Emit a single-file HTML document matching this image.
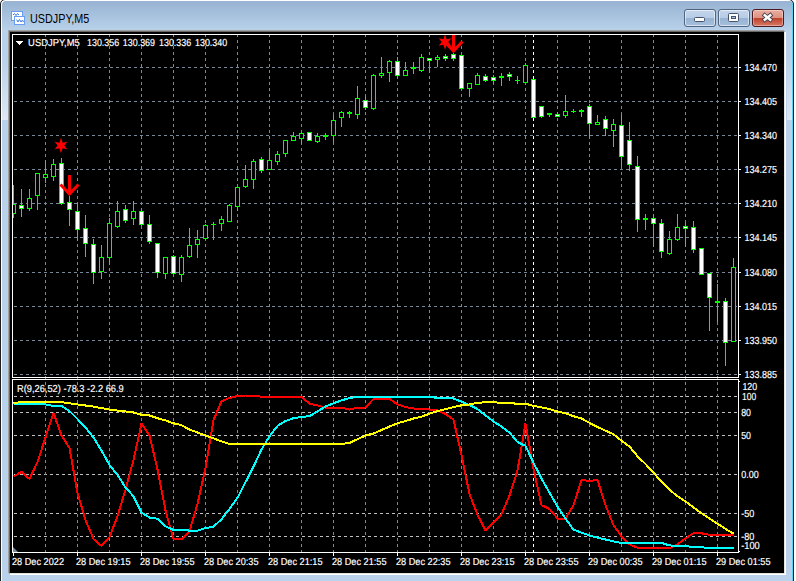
<!DOCTYPE html>
<html lang="en">
<head>
<meta charset="utf-8">
<title>USDJPY,M5</title>
<style>
html,body{margin:0;padding:0;background:#ffffff;}
html{overflow:hidden;}
body{width:796px;height:581px;overflow:hidden;font-family:"Liberation Sans",Arial,sans-serif;}
#screen{position:relative;width:796px;height:581px;overflow:hidden;background:#ffffff;}
#win{position:absolute;left:0;top:-1px;width:792px;height:600px;border:1px solid #1e1e1e;border-radius:5px 5px 0 0;
 background:linear-gradient(to bottom,#98b3d1 0px,#99b5d3 3px,#b9d1ea 30px,#b9d1ea 100%);
 box-shadow:inset 1px 1px 0 0 #ffffff, inset -1px 0 0 0 #5fd0f0;}
#title{position:absolute;left:29px;top:11px;height:16px;line-height:16px;font-size:12px;color:#000;white-space:nowrap;
 transform-origin:0 50%;transform:scaleX(0.9);letter-spacing:0;}
#icon{position:absolute;left:9px;top:10px;width:16px;height:16px;}
.btn{position:absolute;top:9px;width:30px;height:16px;border:1px solid #50637f;border-radius:3px;
 background:linear-gradient(to bottom,#c4d5eb 0%,#b7cce6 47%,#97b2d2 50%,#a6bfdd 100%);
 box-shadow:inset 0 0 0 1px rgba(255,255,255,0.55);}
#bmin{left:683px;} #bmax{left:717px;}
#bclose{left:751px;border-color:#4d1a21;
 background:linear-gradient(to bottom,#eaad9f 0%,#dd9383 47%,#bf4027 50%,#d67864 100%);
 box-shadow:inset 0 0 0 1px rgba(255,255,255,0.35);}
.btn svg{position:absolute;left:0;top:0;width:30px;height:16px;}
#client{position:absolute;left:8px;top:31px;width:774px;height:541px;background:#000;
 border-style:solid;border-width:1px;border-color:#696969 #e3e3e3 #e3e3e3 #696969;
 box-shadow:-1px -1px 0 0 #a0a0a0, 1px 1px 0 0 #ffffff;}
.glow{position:absolute;top:58px;height:62px;width:5px;background:linear-gradient(to bottom,rgba(255,255,255,0) 0%,rgba(255,255,255,0.5) 100%);}
#glowl{left:1px;width:6px;} #glowr{left:786px;}
#chart{position:absolute;left:0;top:0;width:796px;height:581px;}
</style>
</head>
<body>
<div id="screen">
<div id="win">
  <svg id="icon" viewBox="0 0 16 16" aria-hidden="true">
    <g shape-rendering="crispEdges">
    <rect x="1.5" y="1.5" width="11" height="9" fill="#ffffff" stroke="#6a9cf4" stroke-width="1"/>
    <rect x="4.5" y="6.5" width="10" height="8" fill="#ffffff" stroke="#6a9cf4" stroke-width="1"/>
    </g>
    <path d="M3 5 L4.5 3.5 L6 5.5 L7.5 3.5 L9 5" fill="none" stroke="#3a78e0" stroke-width="1"/>
    <path d="M6.5 9.5 L8 12 L9.5 9.5 L11 12 L12.5 10 L13.5 12" fill="none" stroke="#3a78e0" stroke-width="1"/>
  </svg>
  <div id="title">USDJPY,M5</div>
  <div class="btn" id="bmin"><svg viewBox="0 0 30 16"><rect x="9.5" y="7.5" width="10" height="4" rx="1" fill="#ffffff" stroke="#46526a"/></svg></div>
  <div class="btn" id="bmax"><svg viewBox="0 0 30 16"><rect x="9.5" y="3.5" width="10" height="8" rx="1" fill="#ffffff" stroke="#46526a"/><rect x="12.5" y="6.5" width="4" height="2" fill="#a9c3e2" stroke="#46526a"/></svg></div>
  <div class="btn" id="bclose"><svg viewBox="0 0 30 16"><path d="M11.7 5.3 L17.3 9.7 M17.3 5.3 L11.7 9.7" stroke="#46404a" stroke-width="4.2" stroke-linecap="square" fill="none"/><path d="M11.7 5.3 L17.3 9.7 M17.3 5.3 L11.7 9.7" stroke="#ffffff" stroke-width="2.4" stroke-linecap="square" fill="none"/></svg></div>
  <div class="glow" id="glowl"></div>
  <div class="glow" id="glowr"></div>
  <div id="client"></div>
</div>
<svg id="chart" width="796" height="581" viewBox="0 0 796 581">
<defs>
<clipPath id="mainclip"><rect x="13" y="35" width="725" height="342"/></clipPath>
<clipPath id="indclip"><rect x="13" y="380" width="725" height="172"/></clipPath>
</defs>
<g id="grid" stroke="#778899" stroke-width="1" stroke-dasharray="3 3" shape-rendering="crispEdges" fill="none">
<line x1="14" y1="67.5" x2="738" y2="67.5"/>
<line x1="14" y1="101.5" x2="738" y2="101.5"/>
<line x1="14" y1="135.5" x2="738" y2="135.5"/>
<line x1="14" y1="169.5" x2="738" y2="169.5"/>
<line x1="14" y1="203.5" x2="738" y2="203.5"/>
<line x1="14" y1="237.5" x2="738" y2="237.5"/>
<line x1="14" y1="272.5" x2="738" y2="272.5"/>
<line x1="14" y1="306.5" x2="738" y2="306.5"/>
<line x1="14" y1="340.5" x2="738" y2="340.5"/>
<line x1="14" y1="374.5" x2="738" y2="374.5"/>
<line x1="14" y1="396.5" x2="738" y2="396.5" stroke="#c0c0c0"/>
<line x1="14" y1="412.5" x2="738" y2="412.5" stroke="#c0c0c0"/>
<line x1="14" y1="435.5" x2="738" y2="435.5" stroke="#c0c0c0"/>
<line x1="14" y1="474.5" x2="738" y2="474.5" stroke="#c0c0c0"/>
<line x1="14" y1="513.5" x2="738" y2="513.5" stroke="#c0c0c0"/>
<line x1="14" y1="536.5" x2="738" y2="536.5" stroke="#c0c0c0"/>
<line x1="45.5" y1="34" x2="45.5" y2="552"/>
<line x1="77.5" y1="34" x2="77.5" y2="552"/>
<line x1="109.5" y1="34" x2="109.5" y2="552"/>
<line x1="141.5" y1="34" x2="141.5" y2="552"/>
<line x1="173.5" y1="34" x2="173.5" y2="552"/>
<line x1="205.5" y1="34" x2="205.5" y2="552"/>
<line x1="237.5" y1="34" x2="237.5" y2="552"/>
<line x1="269.5" y1="34" x2="269.5" y2="552"/>
<line x1="301.5" y1="34" x2="301.5" y2="552"/>
<line x1="333.5" y1="34" x2="333.5" y2="552"/>
<line x1="365.5" y1="34" x2="365.5" y2="552"/>
<line x1="397.5" y1="34" x2="397.5" y2="552"/>
<line x1="429.5" y1="34" x2="429.5" y2="552"/>
<line x1="461.5" y1="34" x2="461.5" y2="552"/>
<line x1="493.5" y1="34" x2="493.5" y2="552"/>
<line x1="525.5" y1="34" x2="525.5" y2="552"/>
<line x1="557.5" y1="34" x2="557.5" y2="552"/>
<line x1="589.5" y1="34" x2="589.5" y2="552"/>
<line x1="621.5" y1="34" x2="621.5" y2="552"/>
<line x1="653.5" y1="34" x2="653.5" y2="552"/>
<line x1="685.5" y1="34" x2="685.5" y2="552"/>
<line x1="717.5" y1="34" x2="717.5" y2="552"/>
</g>
<line id="daysep" x1="533.5" y1="34" x2="533.5" y2="552" stroke="#ffffff" stroke-width="1" stroke-dasharray="3 3" shape-rendering="crispEdges"/>
<g id="candles" shape-rendering="crispEdges" clip-path="url(#mainclip)">
<rect x="13" y="185" width="1" height="33" fill="#00ff00"/>
<rect x="11" y="204" width="5" height="10" fill="#00ff00"/>
<rect x="12" y="205" width="3" height="8" fill="#000000"/>
<rect x="21" y="189" width="1" height="28" fill="#00ff00"/>
<rect x="19" y="205" width="5" height="4" fill="#00ff00"/>
<rect x="20" y="206" width="3" height="2" fill="#ffffff"/>
<rect x="29" y="189" width="1" height="22" fill="#00ff00"/>
<rect x="27" y="198" width="5" height="11" fill="#00ff00"/>
<rect x="28" y="199" width="3" height="9" fill="#000000"/>
<rect x="37" y="173" width="1" height="37" fill="#00ff00"/>
<rect x="35" y="173" width="5" height="23" fill="#00ff00"/>
<rect x="36" y="174" width="3" height="21" fill="#000000"/>
<rect x="45" y="160" width="1" height="23" fill="#00ff00"/>
<rect x="43" y="174" width="5" height="4" fill="#00ff00"/>
<rect x="44" y="175" width="3" height="2" fill="#000000"/>
<rect x="53" y="159" width="1" height="22" fill="#00ff00"/>
<rect x="51" y="164" width="5" height="13" fill="#00ff00"/>
<rect x="52" y="165" width="3" height="11" fill="#000000"/>
<rect x="61" y="158" width="1" height="47" fill="#00ff00"/>
<rect x="59" y="163" width="5" height="41" fill="#00ff00"/>
<rect x="60" y="164" width="3" height="39" fill="#ffffff"/>
<rect x="69" y="196" width="1" height="30" fill="#00ff00"/>
<rect x="67" y="202" width="5" height="8" fill="#00ff00"/>
<rect x="68" y="203" width="3" height="6" fill="#ffffff"/>
<rect x="77" y="203" width="1" height="38" fill="#00ff00"/>
<rect x="75" y="211" width="5" height="19" fill="#00ff00"/>
<rect x="76" y="212" width="3" height="17" fill="#ffffff"/>
<rect x="85" y="215" width="1" height="42" fill="#00ff00"/>
<rect x="83" y="228" width="5" height="16" fill="#00ff00"/>
<rect x="84" y="229" width="3" height="14" fill="#ffffff"/>
<rect x="93" y="239" width="1" height="45" fill="#00ff00"/>
<rect x="91" y="244" width="5" height="29" fill="#00ff00"/>
<rect x="92" y="245" width="3" height="27" fill="#ffffff"/>
<rect x="101" y="245" width="1" height="34" fill="#00ff00"/>
<rect x="99" y="257" width="5" height="15" fill="#00ff00"/>
<rect x="100" y="258" width="3" height="13" fill="#000000"/>
<rect x="109" y="218" width="1" height="47" fill="#00ff00"/>
<rect x="107" y="223" width="5" height="35" fill="#00ff00"/>
<rect x="108" y="224" width="3" height="33" fill="#000000"/>
<rect x="117" y="201" width="1" height="27" fill="#00ff00"/>
<rect x="115" y="211" width="5" height="16" fill="#00ff00"/>
<rect x="116" y="212" width="3" height="14" fill="#000000"/>
<rect x="125" y="205" width="1" height="18" fill="#00ff00"/>
<rect x="123" y="209" width="5" height="12" fill="#00ff00"/>
<rect x="124" y="210" width="3" height="10" fill="#ffffff"/>
<rect x="133" y="201" width="1" height="24" fill="#00ff00"/>
<rect x="131" y="211" width="5" height="8" fill="#00ff00"/>
<rect x="132" y="212" width="3" height="6" fill="#000000"/>
<rect x="141" y="208" width="1" height="18" fill="#00ff00"/>
<rect x="139" y="211" width="5" height="14" fill="#00ff00"/>
<rect x="140" y="212" width="3" height="12" fill="#ffffff"/>
<rect x="149" y="215" width="1" height="29" fill="#00ff00"/>
<rect x="147" y="224" width="5" height="18" fill="#00ff00"/>
<rect x="148" y="225" width="3" height="16" fill="#ffffff"/>
<rect x="157" y="243" width="1" height="35" fill="#00ff00"/>
<rect x="155" y="243" width="5" height="30" fill="#00ff00"/>
<rect x="156" y="244" width="3" height="28" fill="#ffffff"/>
<rect x="165" y="257" width="1" height="22" fill="#00ff00"/>
<rect x="163" y="257" width="5" height="17" fill="#00ff00"/>
<rect x="164" y="258" width="3" height="15" fill="#000000"/>
<rect x="173" y="255" width="1" height="19" fill="#00ff00"/>
<rect x="171" y="256" width="5" height="18" fill="#00ff00"/>
<rect x="172" y="257" width="3" height="16" fill="#ffffff"/>
<rect x="181" y="255" width="1" height="27" fill="#00ff00"/>
<rect x="179" y="257" width="5" height="18" fill="#00ff00"/>
<rect x="180" y="258" width="3" height="16" fill="#000000"/>
<rect x="189" y="228" width="1" height="30" fill="#00ff00"/>
<rect x="187" y="245" width="5" height="12" fill="#00ff00"/>
<rect x="188" y="246" width="3" height="10" fill="#000000"/>
<rect x="197" y="230" width="1" height="28" fill="#00ff00"/>
<rect x="195" y="239" width="5" height="6" fill="#00ff00"/>
<rect x="196" y="240" width="3" height="4" fill="#000000"/>
<rect x="205" y="224" width="1" height="16" fill="#00ff00"/>
<rect x="203" y="225" width="5" height="14" fill="#00ff00"/>
<rect x="204" y="226" width="3" height="12" fill="#000000"/>
<rect x="213" y="222" width="1" height="18" fill="#00ff00"/>
<rect x="211" y="224" width="5" height="1" fill="#00ff00"/>
<rect x="221" y="216" width="1" height="15" fill="#00ff00"/>
<rect x="219" y="219" width="5" height="5" fill="#00ff00"/>
<rect x="220" y="220" width="3" height="3" fill="#000000"/>
<rect x="229" y="204" width="1" height="18" fill="#00ff00"/>
<rect x="227" y="205" width="5" height="17" fill="#00ff00"/>
<rect x="228" y="206" width="3" height="15" fill="#000000"/>
<rect x="237" y="187" width="1" height="24" fill="#00ff00"/>
<rect x="235" y="187" width="5" height="20" fill="#00ff00"/>
<rect x="236" y="188" width="3" height="18" fill="#000000"/>
<rect x="245" y="165" width="1" height="23" fill="#00ff00"/>
<rect x="243" y="179" width="5" height="8" fill="#00ff00"/>
<rect x="244" y="180" width="3" height="6" fill="#000000"/>
<rect x="253" y="159" width="1" height="30" fill="#00ff00"/>
<rect x="251" y="161" width="5" height="19" fill="#00ff00"/>
<rect x="252" y="162" width="3" height="17" fill="#000000"/>
<rect x="261" y="157" width="1" height="16" fill="#00ff00"/>
<rect x="259" y="159" width="5" height="12" fill="#00ff00"/>
<rect x="260" y="160" width="3" height="10" fill="#ffffff"/>
<rect x="269" y="150" width="1" height="20" fill="#00ff00"/>
<rect x="267" y="160" width="5" height="10" fill="#00ff00"/>
<rect x="268" y="161" width="3" height="8" fill="#000000"/>
<rect x="277" y="151" width="1" height="14" fill="#00ff00"/>
<rect x="275" y="154" width="5" height="8" fill="#00ff00"/>
<rect x="276" y="155" width="3" height="6" fill="#000000"/>
<rect x="285" y="140" width="1" height="17" fill="#00ff00"/>
<rect x="283" y="140" width="5" height="14" fill="#00ff00"/>
<rect x="284" y="141" width="3" height="12" fill="#000000"/>
<rect x="293" y="132" width="1" height="9" fill="#00ff00"/>
<rect x="291" y="136" width="5" height="5" fill="#00ff00"/>
<rect x="292" y="137" width="3" height="3" fill="#000000"/>
<rect x="301" y="132" width="1" height="12" fill="#00ff00"/>
<rect x="299" y="133" width="5" height="6" fill="#00ff00"/>
<rect x="300" y="134" width="3" height="4" fill="#000000"/>
<rect x="309" y="132" width="1" height="9" fill="#00ff00"/>
<rect x="307" y="132" width="5" height="9" fill="#00ff00"/>
<rect x="308" y="133" width="3" height="7" fill="#ffffff"/>
<rect x="317" y="133" width="1" height="10" fill="#00ff00"/>
<rect x="315" y="136" width="5" height="6" fill="#00ff00"/>
<rect x="316" y="137" width="3" height="4" fill="#000000"/>
<rect x="325" y="133" width="1" height="7" fill="#00ff00"/>
<rect x="323" y="135" width="5" height="2" fill="#00ff00"/>
<rect x="333" y="115" width="1" height="27" fill="#00ff00"/>
<rect x="331" y="120" width="5" height="16" fill="#00ff00"/>
<rect x="332" y="121" width="3" height="14" fill="#000000"/>
<rect x="341" y="111" width="1" height="16" fill="#00ff00"/>
<rect x="339" y="112" width="5" height="6" fill="#00ff00"/>
<rect x="340" y="113" width="3" height="4" fill="#000000"/>
<rect x="349" y="111" width="1" height="7" fill="#00ff00"/>
<rect x="347" y="112" width="5" height="2" fill="#00ff00"/>
<rect x="357" y="86" width="1" height="33" fill="#00ff00"/>
<rect x="355" y="98" width="5" height="17" fill="#00ff00"/>
<rect x="356" y="99" width="3" height="15" fill="#000000"/>
<rect x="365" y="96" width="1" height="14" fill="#00ff00"/>
<rect x="363" y="100" width="5" height="8" fill="#00ff00"/>
<rect x="364" y="101" width="3" height="6" fill="#ffffff"/>
<rect x="373" y="74" width="1" height="36" fill="#00ff00"/>
<rect x="371" y="75" width="5" height="34" fill="#00ff00"/>
<rect x="372" y="76" width="3" height="32" fill="#000000"/>
<rect x="381" y="57" width="1" height="21" fill="#00ff00"/>
<rect x="379" y="73" width="5" height="3" fill="#00ff00"/>
<rect x="380" y="74" width="3" height="1" fill="#000000"/>
<rect x="389" y="60" width="1" height="22" fill="#00ff00"/>
<rect x="387" y="61" width="5" height="12" fill="#00ff00"/>
<rect x="388" y="62" width="3" height="10" fill="#000000"/>
<rect x="397" y="57" width="1" height="21" fill="#00ff00"/>
<rect x="395" y="61" width="5" height="15" fill="#00ff00"/>
<rect x="396" y="62" width="3" height="13" fill="#ffffff"/>
<rect x="405" y="62" width="1" height="14" fill="#00ff00"/>
<rect x="403" y="70" width="5" height="6" fill="#00ff00"/>
<rect x="404" y="71" width="3" height="4" fill="#000000"/>
<rect x="413" y="62" width="1" height="12" fill="#00ff00"/>
<rect x="411" y="67" width="5" height="2" fill="#00ff00"/>
<rect x="421" y="54" width="1" height="18" fill="#00ff00"/>
<rect x="419" y="57" width="5" height="14" fill="#00ff00"/>
<rect x="420" y="58" width="3" height="12" fill="#000000"/>
<rect x="429" y="58" width="1" height="15" fill="#00ff00"/>
<rect x="427" y="58" width="5" height="3" fill="#00ff00"/>
<rect x="428" y="59" width="3" height="1" fill="#ffffff"/>
<rect x="437" y="55" width="1" height="12" fill="#00ff00"/>
<rect x="435" y="57" width="5" height="3" fill="#00ff00"/>
<rect x="436" y="58" width="3" height="1" fill="#000000"/>
<rect x="445" y="54" width="1" height="7" fill="#00ff00"/>
<rect x="443" y="56" width="5" height="3" fill="#00ff00"/>
<rect x="444" y="57" width="3" height="1" fill="#ffffff"/>
<rect x="453" y="53" width="1" height="8" fill="#00ff00"/>
<rect x="451" y="54" width="5" height="5" fill="#00ff00"/>
<rect x="452" y="55" width="3" height="3" fill="#ffffff"/>
<rect x="461" y="55" width="1" height="34" fill="#00ff00"/>
<rect x="459" y="55" width="5" height="34" fill="#00ff00"/>
<rect x="460" y="56" width="3" height="32" fill="#ffffff"/>
<rect x="469" y="83" width="1" height="14" fill="#00ff00"/>
<rect x="467" y="83" width="5" height="6" fill="#00ff00"/>
<rect x="468" y="84" width="3" height="4" fill="#000000"/>
<rect x="477" y="73" width="1" height="12" fill="#00ff00"/>
<rect x="475" y="75" width="5" height="10" fill="#00ff00"/>
<rect x="476" y="76" width="3" height="8" fill="#000000"/>
<rect x="485" y="74" width="1" height="8" fill="#00ff00"/>
<rect x="483" y="76" width="5" height="5" fill="#00ff00"/>
<rect x="484" y="77" width="3" height="3" fill="#ffffff"/>
<rect x="493" y="75" width="1" height="9" fill="#00ff00"/>
<rect x="491" y="77" width="5" height="4" fill="#00ff00"/>
<rect x="492" y="78" width="3" height="2" fill="#ffffff"/>
<rect x="501" y="73" width="1" height="13" fill="#00ff00"/>
<rect x="499" y="76" width="5" height="2" fill="#00ff00"/>
<rect x="509" y="72" width="1" height="9" fill="#00ff00"/>
<rect x="507" y="74" width="5" height="3" fill="#00ff00"/>
<rect x="508" y="75" width="3" height="1" fill="#ffffff"/>
<rect x="517" y="76" width="1" height="8" fill="#00ff00"/>
<rect x="515" y="80" width="5" height="1" fill="#00ff00"/>
<rect x="525" y="63" width="1" height="20" fill="#00ff00"/>
<rect x="523" y="65" width="5" height="18" fill="#00ff00"/>
<rect x="524" y="66" width="3" height="16" fill="#000000"/>
<rect x="533" y="79" width="1" height="39" fill="#00ff00"/>
<rect x="531" y="79" width="5" height="39" fill="#00ff00"/>
<rect x="532" y="80" width="3" height="37" fill="#ffffff"/>
<rect x="541" y="106" width="1" height="12" fill="#00ff00"/>
<rect x="539" y="106" width="5" height="11" fill="#00ff00"/>
<rect x="540" y="107" width="3" height="9" fill="#ffffff"/>
<rect x="549" y="113" width="1" height="4" fill="#00ff00"/>
<rect x="547" y="113" width="5" height="2" fill="#00ff00"/>
<rect x="557" y="112" width="1" height="5" fill="#00ff00"/>
<rect x="555" y="114" width="5" height="3" fill="#00ff00"/>
<rect x="556" y="115" width="3" height="1" fill="#ffffff"/>
<rect x="565" y="95" width="1" height="23" fill="#00ff00"/>
<rect x="563" y="111" width="5" height="5" fill="#00ff00"/>
<rect x="564" y="112" width="3" height="3" fill="#000000"/>
<rect x="573" y="109" width="1" height="4" fill="#00ff00"/>
<rect x="571" y="111" width="5" height="1" fill="#00ff00"/>
<rect x="581" y="109" width="1" height="8" fill="#00ff00"/>
<rect x="579" y="110" width="5" height="2" fill="#00ff00"/>
<rect x="589" y="104" width="1" height="34" fill="#00ff00"/>
<rect x="587" y="106" width="5" height="18" fill="#00ff00"/>
<rect x="588" y="107" width="3" height="16" fill="#ffffff"/>
<rect x="597" y="115" width="1" height="10" fill="#00ff00"/>
<rect x="595" y="122" width="5" height="3" fill="#00ff00"/>
<rect x="596" y="123" width="3" height="1" fill="#000000"/>
<rect x="605" y="116" width="1" height="20" fill="#00ff00"/>
<rect x="603" y="119" width="5" height="10" fill="#00ff00"/>
<rect x="604" y="120" width="3" height="8" fill="#ffffff"/>
<rect x="613" y="119" width="1" height="28" fill="#00ff00"/>
<rect x="611" y="124" width="5" height="7" fill="#00ff00"/>
<rect x="612" y="125" width="3" height="5" fill="#000000"/>
<rect x="621" y="115" width="1" height="52" fill="#00ff00"/>
<rect x="619" y="125" width="5" height="32" fill="#00ff00"/>
<rect x="620" y="126" width="3" height="30" fill="#ffffff"/>
<rect x="629" y="122" width="1" height="49" fill="#00ff00"/>
<rect x="627" y="140" width="5" height="25" fill="#00ff00"/>
<rect x="628" y="141" width="3" height="23" fill="#ffffff"/>
<rect x="637" y="156" width="1" height="76" fill="#00ff00"/>
<rect x="635" y="166" width="5" height="54" fill="#00ff00"/>
<rect x="636" y="167" width="3" height="52" fill="#ffffff"/>
<rect x="645" y="214" width="1" height="16" fill="#00ff00"/>
<rect x="643" y="218" width="5" height="2" fill="#00ff00"/>
<rect x="653" y="214" width="1" height="33" fill="#00ff00"/>
<rect x="651" y="218" width="5" height="6" fill="#00ff00"/>
<rect x="652" y="219" width="3" height="4" fill="#ffffff"/>
<rect x="661" y="219" width="1" height="39" fill="#00ff00"/>
<rect x="659" y="223" width="5" height="29" fill="#00ff00"/>
<rect x="660" y="224" width="3" height="27" fill="#ffffff"/>
<rect x="669" y="231" width="1" height="24" fill="#00ff00"/>
<rect x="667" y="239" width="5" height="15" fill="#00ff00"/>
<rect x="668" y="240" width="3" height="13" fill="#000000"/>
<rect x="677" y="214" width="1" height="27" fill="#00ff00"/>
<rect x="675" y="227" width="5" height="13" fill="#00ff00"/>
<rect x="676" y="228" width="3" height="11" fill="#000000"/>
<rect x="685" y="223" width="1" height="24" fill="#00ff00"/>
<rect x="683" y="226" width="5" height="3" fill="#00ff00"/>
<rect x="684" y="227" width="3" height="1" fill="#ffffff"/>
<rect x="693" y="221" width="1" height="32" fill="#00ff00"/>
<rect x="691" y="227" width="5" height="23" fill="#00ff00"/>
<rect x="692" y="228" width="3" height="21" fill="#ffffff"/>
<rect x="701" y="248" width="1" height="27" fill="#00ff00"/>
<rect x="699" y="248" width="5" height="27" fill="#00ff00"/>
<rect x="700" y="249" width="3" height="25" fill="#ffffff"/>
<rect x="709" y="273" width="1" height="58" fill="#00ff00"/>
<rect x="707" y="273" width="5" height="25" fill="#00ff00"/>
<rect x="708" y="274" width="3" height="23" fill="#ffffff"/>
<rect x="717" y="284" width="1" height="38" fill="#00ff00"/>
<rect x="715" y="301" width="5" height="2" fill="#00ff00"/>
<rect x="725" y="298" width="1" height="68" fill="#00ff00"/>
<rect x="723" y="301" width="5" height="42" fill="#00ff00"/>
<rect x="724" y="302" width="3" height="40" fill="#ffffff"/>
<rect x="733" y="258" width="1" height="84" fill="#00ff00"/>
<rect x="731" y="267" width="5" height="75" fill="#00ff00"/>
<rect x="732" y="268" width="3" height="73" fill="#000000"/>
</g>
<g id="signals" clip-path="url(#mainclip)">
<polygon points="61.00,137.80 62.65,142.64 67.32,141.85 64.30,145.50 67.32,149.15 62.65,148.36 61.00,153.20 59.35,148.36 54.68,149.15 57.70,145.50 54.68,141.85 59.35,142.64" fill="#ff0000"/>
<path d="M69.5 175.0 V194.5" stroke="#ff0000" stroke-width="3" fill="none"/><path d="M60.5 184.5 L69.5 194.0 L78.5 184.5" stroke="#ff0000" stroke-width="3" fill="none" stroke-linejoin="miter"/>
<polygon points="445.00,34.30 446.65,39.14 451.32,38.35 448.30,42.00 451.32,45.65 446.65,44.86 445.00,49.70 443.35,44.86 438.68,45.65 441.70,42.00 438.68,38.35 443.35,39.14" fill="#ff0000"/>
<path d="M453.5 32.0 V51.5" stroke="#ff0000" stroke-width="3" fill="none"/><path d="M444.5 41.5 L453.5 51.0 L462.5 41.5" stroke="#ff0000" stroke-width="3" fill="none" stroke-linejoin="miter"/>
</g>
<g id="indicator" clip-path="url(#indclip)">
<polyline points="13.5,476.4 21.5,471.9 29.5,479.0 37.5,462.0 45.5,437.5 53.5,412.8 61.5,435.5 69.5,448.0 77.5,493.0 85.5,520.0 93.5,539.0 101.5,546.0 109.5,537.0 117.5,516.3 125.5,489.7 133.5,460.0 141.5,423.6 149.5,435.5 157.5,469.4 165.5,510.4 173.5,539.2 181.5,539.2 189.5,531.1 197.5,504.0 205.5,468.0 213.5,420.0 221.5,401.4 229.5,398.0 237.5,396.0 245.5,395.5 253.5,395.8 261.5,396.7 269.5,396.7 277.5,396.7 285.5,396.7 293.5,396.7 301.5,396.7 309.5,403.7 317.5,405.4 325.5,407.7 333.5,407.7 341.5,407.8 349.5,409.6 357.5,407.8 365.5,407.5 373.5,398.9 381.5,398.8 389.5,398.9 397.5,404.4 405.5,407.1 413.5,408.5 421.5,408.5 429.5,409.6 437.5,410.3 445.5,414.0 453.5,419.6 461.5,455.0 469.5,494.1 477.5,514.8 485.5,530.3 493.5,522.2 501.5,514.1 509.5,495.6 517.5,470.4 525.5,423.6 533.5,469.0 541.5,505.2 549.5,508.9 557.5,518.5 565.5,518.5 573.5,505.2 581.5,480.1 589.5,480.8 597.5,480.1 605.5,505.2 613.5,525.2 621.5,536.3 629.5,544.4 637.5,547.7 645.5,547.7 653.5,548.4 661.5,548.4 669.5,548.1 677.5,544.4 685.5,538.5 693.5,533.3 701.5,533.3 709.5,534.8 717.5,534.8 725.5,534.8 733.5,534.8" fill="none" stroke="#ff0000" stroke-width="2" stroke-linejoin="round" shape-rendering="crispEdges"/>
<polyline points="13.5,403.4 21.5,404.4 29.5,404.4 37.5,404.4 45.5,404.4 53.5,405.9 61.5,405.9 69.5,411.0 77.5,419.0 85.5,427.5 93.5,437.5 101.5,450.5 109.5,465.0 117.5,474.9 125.5,487.4 133.5,496.3 141.5,512.6 149.5,517.5 157.5,518.8 165.5,526.4 173.5,529.9 181.5,529.9 189.5,530.6 197.5,530.6 205.5,528.1 213.5,526.7 221.5,519.3 229.5,508.9 237.5,497.8 245.5,482.3 253.5,466.7 261.5,449.5 269.5,436.2 277.5,425.9 285.5,421.0 293.5,418.2 301.5,417.0 309.5,416.2 317.5,411.4 325.5,406.6 333.5,403.2 341.5,400.4 349.5,398.0 357.5,397.0 365.5,396.7 373.5,396.7 381.5,396.7 389.5,396.7 397.5,396.7 405.5,396.7 413.5,396.7 421.5,396.7 429.5,396.7 437.5,398.0 445.5,398.0 453.5,398.5 461.5,401.6 469.5,405.1 477.5,409.1 485.5,415.5 493.5,421.4 501.5,426.6 509.5,432.5 517.5,442.1 525.5,445.8 533.5,462.8 541.5,478.6 549.5,492.6 557.5,506.7 565.5,518.5 573.5,529.6 581.5,532.6 589.5,535.5 597.5,537.7 605.5,539.5 613.5,541.4 621.5,542.9 629.5,542.9 637.5,542.9 645.5,542.9 653.5,542.9 661.5,542.9 669.5,545.4 677.5,545.9 685.5,546.2 693.5,546.9 701.5,547.4 709.5,547.7 717.5,547.7 725.5,547.7 733.5,547.7" fill="none" stroke="#00ffff" stroke-width="2" stroke-linejoin="round" shape-rendering="crispEdges"/>
<polyline points="13.5,402.9 21.5,402.2 29.5,402.2 37.5,402.2 45.5,402.2 53.5,402.2 61.5,402.2 69.5,403.3 77.5,404.4 85.5,405.5 93.5,406.6 101.5,408.1 109.5,409.6 117.5,410.6 125.5,411.5 133.5,412.5 141.5,414.8 149.5,415.5 157.5,418.2 165.5,420.4 173.5,423.3 181.5,425.1 189.5,429.6 197.5,432.5 205.5,435.5 213.5,438.4 221.5,441.4 229.5,443.9 237.5,443.9 245.5,443.9 253.5,443.9 261.5,443.9 269.5,443.9 277.5,443.9 285.5,443.9 293.5,443.9 301.5,443.9 309.5,443.9 317.5,443.9 325.5,443.9 333.5,443.9 341.5,443.9 349.5,442.9 357.5,439.2 365.5,435.5 373.5,433.5 381.5,430.0 389.5,426.6 397.5,423.2 405.5,421.1 413.5,418.5 421.5,416.7 429.5,413.7 437.5,411.1 445.5,409.1 453.5,407.1 461.5,405.3 469.5,404.4 477.5,402.9 485.5,402.2 493.5,402.2 501.5,402.9 509.5,403.2 517.5,403.7 525.5,403.7 533.5,405.9 541.5,407.4 549.5,409.1 557.5,411.5 565.5,413.3 573.5,416.2 581.5,418.5 589.5,422.9 597.5,427.0 605.5,430.7 613.5,434.3 621.5,440.7 629.5,446.6 637.5,456.2 645.5,464.0 653.5,472.7 661.5,481.5 669.5,489.7 677.5,496.3 685.5,501.5 693.5,507.4 701.5,513.3 709.5,518.5 717.5,523.7 725.5,528.9 733.5,533.6" fill="none" stroke="#ffff00" stroke-width="2" stroke-linejoin="round" shape-rendering="crispEdges"/>
</g>
<g id="frames" fill="none" stroke="#ffffff" stroke-width="1" shape-rendering="crispEdges">
<rect x="12.5" y="34.5" width="726" height="343"/>
<rect x="12.5" y="379.5" width="726" height="173"/>
<line x1="739" y1="67.5" x2="741" y2="67.5"/>
<line x1="739" y1="101.5" x2="741" y2="101.5"/>
<line x1="739" y1="135.5" x2="741" y2="135.5"/>
<line x1="739" y1="169.5" x2="741" y2="169.5"/>
<line x1="739" y1="203.5" x2="741" y2="203.5"/>
<line x1="739" y1="237.5" x2="741" y2="237.5"/>
<line x1="739" y1="272.5" x2="741" y2="272.5"/>
<line x1="739" y1="306.5" x2="741" y2="306.5"/>
<line x1="739" y1="340.5" x2="741" y2="340.5"/>
<line x1="739" y1="374.5" x2="741" y2="374.5"/>
<line x1="739" y1="381.5" x2="740" y2="381.5"/>
<line x1="739" y1="551.5" x2="740" y2="551.5"/>
<line x1="13.5" y1="553" x2="13.5" y2="556"/>
<line x1="77.5" y1="553" x2="77.5" y2="556"/>
<line x1="141.5" y1="553" x2="141.5" y2="556"/>
<line x1="205.5" y1="553" x2="205.5" y2="556"/>
<line x1="269.5" y1="553" x2="269.5" y2="556"/>
<line x1="333.5" y1="553" x2="333.5" y2="556"/>
<line x1="397.5" y1="553" x2="397.5" y2="556"/>
<line x1="461.5" y1="553" x2="461.5" y2="556"/>
<line x1="525.5" y1="553" x2="525.5" y2="556"/>
<line x1="589.5" y1="553" x2="589.5" y2="556"/>
<line x1="653.5" y1="553" x2="653.5" y2="556"/>
<line x1="717.5" y1="553" x2="717.5" y2="556"/>
</g>
<polygon points="13,547 13,552 18,552" fill="#778899"/>
<polygon points="16,41 23,41 19.5,45" fill="#ffffff" shape-rendering="crispEdges"/>
<g id="labels" text-rendering="geometricPrecision" stroke="#ffffff" stroke-width="0.18" font-family="'Liberation Sans', Arial, sans-serif">
<text x="28.1" y="46.0" font-size="10.2px" fill="#ffffff" text-anchor="start" textLength="51.7" lengthAdjust="spacingAndGlyphs">USDJPY,M5</text>
<text x="87.0" y="46.0" font-size="10.2px" fill="#ffffff" text-anchor="start" textLength="32.2" lengthAdjust="spacingAndGlyphs">130.356</text>
<text x="122.8" y="46.0" font-size="10.2px" fill="#ffffff" text-anchor="start" textLength="32.2" lengthAdjust="spacingAndGlyphs">130.369</text>
<text x="159.0" y="46.0" font-size="10.2px" fill="#ffffff" text-anchor="start" textLength="32.2" lengthAdjust="spacingAndGlyphs">130.336</text>
<text x="195.0" y="46.0" font-size="10.2px" fill="#ffffff" text-anchor="start" textLength="32.2" lengthAdjust="spacingAndGlyphs">130.340</text>
<text x="17.0" y="392.0" font-size="10.2px" fill="#ffffff" text-anchor="start" textLength="106.7" lengthAdjust="spacingAndGlyphs">R(9,26,52) -78.3 -2.2 66.9</text>
<text x="744.5" y="71.0" font-size="10.2px" fill="#ffffff" text-anchor="start" textLength="32.5" lengthAdjust="spacingAndGlyphs">134.470</text>
<text x="744.5" y="105.0" font-size="10.2px" fill="#ffffff" text-anchor="start" textLength="32.5" lengthAdjust="spacingAndGlyphs">134.405</text>
<text x="744.5" y="139.0" font-size="10.2px" fill="#ffffff" text-anchor="start" textLength="32.5" lengthAdjust="spacingAndGlyphs">134.340</text>
<text x="744.5" y="173.0" font-size="10.2px" fill="#ffffff" text-anchor="start" textLength="32.5" lengthAdjust="spacingAndGlyphs">134.275</text>
<text x="744.5" y="207.0" font-size="10.2px" fill="#ffffff" text-anchor="start" textLength="32.5" lengthAdjust="spacingAndGlyphs">134.210</text>
<text x="744.5" y="241.0" font-size="10.2px" fill="#ffffff" text-anchor="start" textLength="32.5" lengthAdjust="spacingAndGlyphs">134.145</text>
<text x="744.5" y="276.0" font-size="10.2px" fill="#ffffff" text-anchor="start" textLength="32.5" lengthAdjust="spacingAndGlyphs">134.080</text>
<text x="744.5" y="310.0" font-size="10.2px" fill="#ffffff" text-anchor="start" textLength="32.5" lengthAdjust="spacingAndGlyphs">134.015</text>
<text x="744.5" y="344.0" font-size="10.2px" fill="#ffffff" text-anchor="start" textLength="32.5" lengthAdjust="spacingAndGlyphs">133.950</text>
<text x="744.5" y="378.0" font-size="10.2px" fill="#ffffff" text-anchor="start" textLength="32.5" lengthAdjust="spacingAndGlyphs">133.885</text>
<text x="742.4" y="390.2" font-size="10.2px" fill="#ffffff" text-anchor="start" textLength="14.7" lengthAdjust="spacingAndGlyphs">120</text>
<text x="742.0" y="400.0" font-size="10.2px" fill="#ffffff" text-anchor="start" textLength="14.2" lengthAdjust="spacingAndGlyphs">100</text>
<text x="741.2" y="416.0" font-size="10.2px" fill="#ffffff" text-anchor="start" textLength="9.8" lengthAdjust="spacingAndGlyphs">80</text>
<text x="741.2" y="439.1" font-size="10.2px" fill="#ffffff" text-anchor="start" textLength="9.8" lengthAdjust="spacingAndGlyphs">50</text>
<text x="741.2" y="478.0" font-size="10.2px" fill="#ffffff" text-anchor="start" textLength="17.5" lengthAdjust="spacingAndGlyphs">0.00</text>
<text x="741.2" y="516.9" font-size="10.2px" fill="#ffffff" text-anchor="start" textLength="13.2" lengthAdjust="spacingAndGlyphs">-50</text>
<text x="741.2" y="540.1" font-size="10.2px" fill="#ffffff" text-anchor="start" textLength="13.2" lengthAdjust="spacingAndGlyphs">-80</text>
<text x="741.2" y="549.2" font-size="10.2px" fill="#ffffff" text-anchor="start" textLength="18.6" lengthAdjust="spacingAndGlyphs">-100</text>
<text x="12.0" y="565.0" font-size="10.2px" fill="#ffffff" text-anchor="start" textLength="52.0" lengthAdjust="spacingAndGlyphs">28 Dec 2022</text>
<text x="76.0" y="565.0" font-size="10.2px" fill="#ffffff" text-anchor="start" textLength="54.5" lengthAdjust="spacingAndGlyphs">28 Dec 19:15</text>
<text x="140.0" y="565.0" font-size="10.2px" fill="#ffffff" text-anchor="start" textLength="54.5" lengthAdjust="spacingAndGlyphs">28 Dec 19:55</text>
<text x="204.0" y="565.0" font-size="10.2px" fill="#ffffff" text-anchor="start" textLength="54.5" lengthAdjust="spacingAndGlyphs">28 Dec 20:35</text>
<text x="268.0" y="565.0" font-size="10.2px" fill="#ffffff" text-anchor="start" textLength="54.5" lengthAdjust="spacingAndGlyphs">28 Dec 21:15</text>
<text x="332.0" y="565.0" font-size="10.2px" fill="#ffffff" text-anchor="start" textLength="54.5" lengthAdjust="spacingAndGlyphs">28 Dec 21:55</text>
<text x="396.0" y="565.0" font-size="10.2px" fill="#ffffff" text-anchor="start" textLength="54.5" lengthAdjust="spacingAndGlyphs">28 Dec 22:35</text>
<text x="460.0" y="565.0" font-size="10.2px" fill="#ffffff" text-anchor="start" textLength="54.5" lengthAdjust="spacingAndGlyphs">28 Dec 23:15</text>
<text x="524.0" y="565.0" font-size="10.2px" fill="#ffffff" text-anchor="start" textLength="54.5" lengthAdjust="spacingAndGlyphs">28 Dec 23:55</text>
<text x="588.0" y="565.0" font-size="10.2px" fill="#ffffff" text-anchor="start" textLength="54.5" lengthAdjust="spacingAndGlyphs">29 Dec 00:35</text>
<text x="652.0" y="565.0" font-size="10.2px" fill="#ffffff" text-anchor="start" textLength="54.5" lengthAdjust="spacingAndGlyphs">29 Dec 01:15</text>
<text x="716.0" y="565.0" font-size="10.2px" fill="#ffffff" text-anchor="start" textLength="54.5" lengthAdjust="spacingAndGlyphs">29 Dec 01:55</text>
</g>
</svg>
</div>
</body>
</html>
